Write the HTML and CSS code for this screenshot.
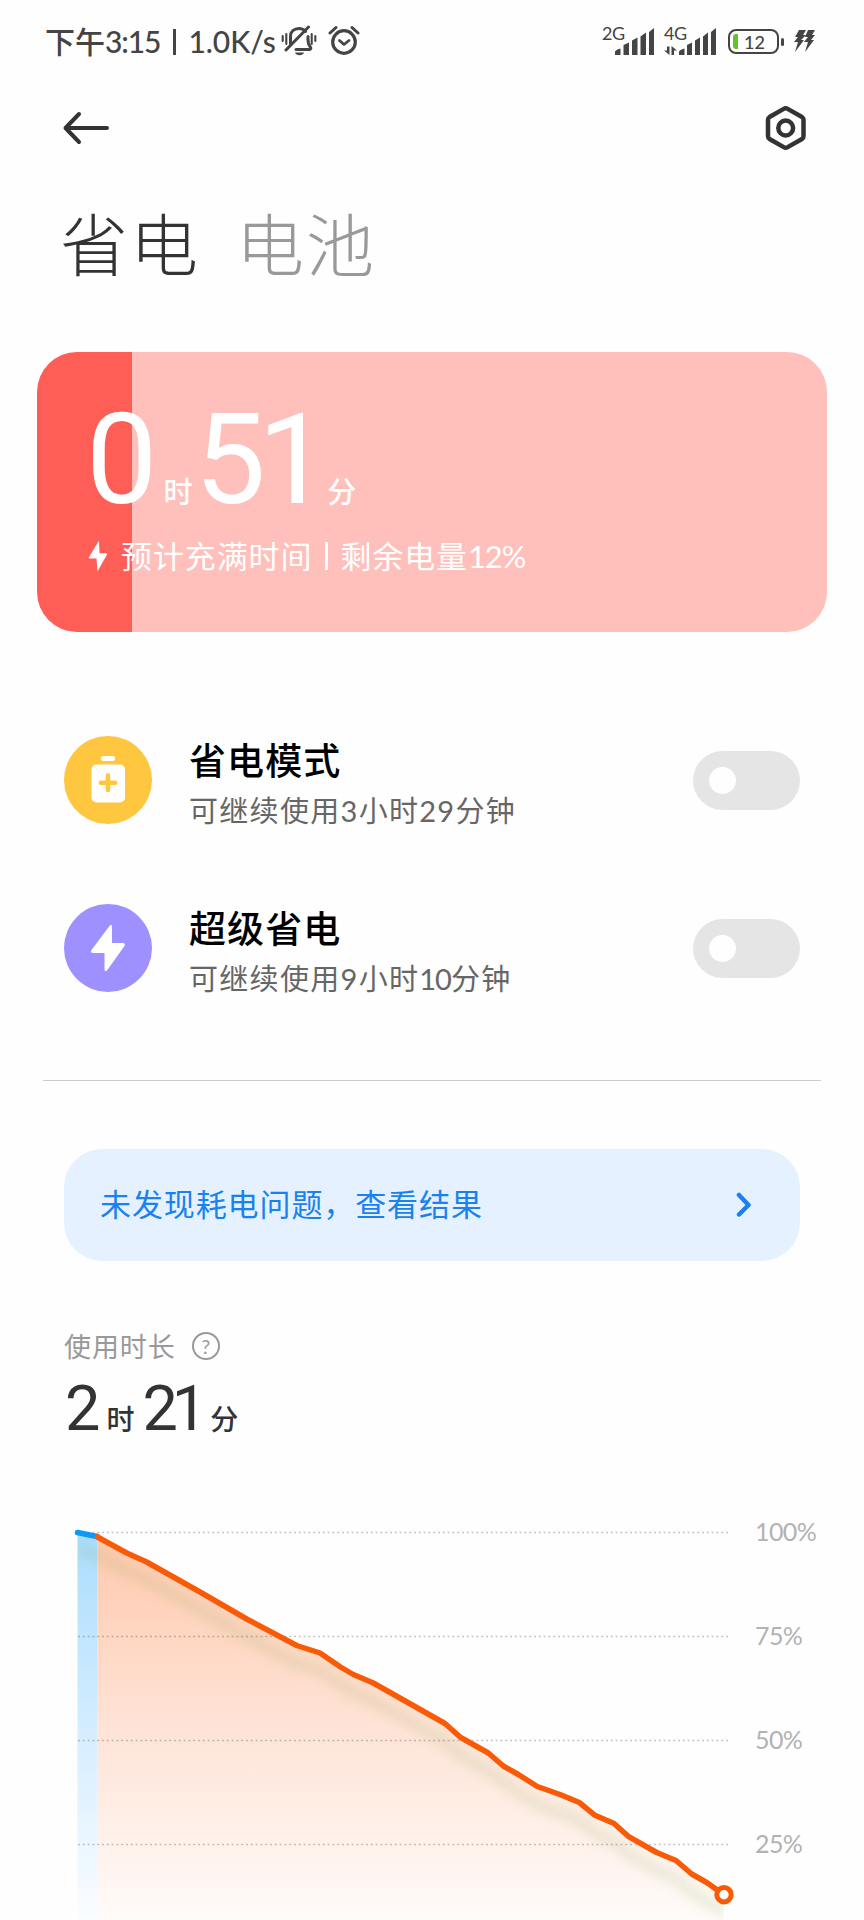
FILE: index.html
```html
<!DOCTYPE html>
<html lang="zh-CN">
<head>
  <meta charset="UTF-8" />
  <meta name="viewport" content="width=device-width, initial-scale=1.0" />
  <title>省电与电池</title>
  <link rel="stylesheet" href="styles.css">
</head>
<body>

  <div class="status-bar">
    <div class="status-left">
      <span class="clock">下午<span class="num">3:15</span></span>
      <span class="sep"></span>
      <span class="speed">1.0K/s</span>
      <svg class="icon-mute" width="36" height="32" viewBox="0 0 36 32" fill="none" stroke="#444" stroke-width="3" stroke-linecap="round">
        <path d="M1.7 11v5M5.3 9v10M30.7 9v10M34.3 11v5" stroke-width="2.1" />
        <path d="M9.5 19V11.500C9.500 6.500 13 3.500 18 3.500c3 0 5 1 6.500 3M27 11.500c0 5-.5 7 2 10 1.500 2 .5 3-1 3H15" />
        <path d="M5 25L27.500 2" />
        <path d="M14 27.500h9c-1 3.500-8 3.500-9 0z" fill="#444" stroke="none" />
      </svg>
      <svg class="icon-alarm" width="32" height="32" viewBox="0 0 32 32" fill="none" stroke="#444" stroke-linecap="round" stroke-linejoin="round">
        <circle cx="16" cy="17" r="11.300" stroke-width="3.200" />
        <path d="M11.500 15.500l4.500 4 5-4" stroke-width="2.800" />
        <path d="M2 8l6-5.500M30 8l-6-5.500" stroke-width="3" />
      </svg>
    </div>
    <div class="status-right">
      <div class="signal">
        <span class="net">2G</span>
        <svg width="52" height="32" viewBox="0 0 52 32" fill="#444">
          <path d="M13 31v-3q0-2 5.500-3.500V31zM21.500 31V21l5.500-2.500V31zM30 31V16.500l5.500-3V31zM38.500 31V12.500l5.500-4V31zM47 31V8l5-4V31z" />
        </svg>
      </div>
      <div class="signal">
        <span class="net">4G</span>
        <svg width="52" height="32" viewBox="0 0 52 32" fill="#444">
          <path d="M3 22.500h2.500V31L0 26.500h3zM7.500 31V22l5.500 4.500h-3V31z" />
          <path d="M15 31v-3q0-2 5.500-3.500V31zM23 31V21l5-2.500V31zM31 31V16.500l5-3V31zM39 31V12.500l5-4V31zM47 31V8l5-4V31z" />
        </svg>
      </div>
      <div class="battery">
        <span class="battery-level"></span>
        <span class="battery-num">12</span>
      </div>
      <svg class="icon-charge" width="24" height="24" viewBox="0 0 24 24" fill="#444">
        <path d="M6 1h7l-3 5h3L8 11h3L2 23 5 13H1l4-5H2zM15 1h7l-3 5h3l-4 5h3l-9 12 3-10h-4l4-5h-3z" />
      </svg>
    </div>
  </div>

  <header class="top-bar">
    <svg width="48" height="34" viewBox="0 0 48 34" fill="none" stroke="#333" stroke-width="4" stroke-linecap="round" stroke-linejoin="round">
      <path d="M17 3L3.500 17 17 31M3.500 17H45" />
    </svg>
    <svg width="42" height="46" viewBox="0 0 42 46" fill="none" stroke="#333" stroke-width="4.500" stroke-linejoin="round">
      <path d="M18.700 3.900q2-1.200 4 0L37 12q1.500 1 1.500 2.700v16.600Q38.500 33 37 34L22.700 42.100q-2 1.200-4 0L4.500 34Q3 33 3 31.300V14.700Q3 13 4.500 12z" />
      <circle cx="20.700" cy="23" r="7.400" />
    </svg>
  </header>

  <nav class="tabs">
    <a class="tab active">省电</a>
    <a class="tab">电池</a>
  </nav>

  <section class="charge-card">
    <div class="charge-time">
      <span class="big">0</span><span class="unit">时</span><span class="big">51</span><span class="unit">分</span>
    </div>
    <div class="charge-info">
      <svg width="20" height="32" viewBox="0 0 20 32" fill="#fff">
        <path d="M11 .5L.8 17.500q-.5 1 .5 1H8.500L9.500 31.500 19 14.500q.5-1.200-.6-1.200H11.500z" />
      </svg>
      <span class="charge-text">预计充满时间</span>
      <span class="bar"></span>
      <span class="charge-text">剩余电量<span class="num">12%</span></span>
    </div>
  </section>

  <section class="modes">
    <div class="mode">
      <svg width="88" height="88" viewBox="0 0 88 88">
        <circle cx="44" cy="44" r="44" fill="#ffc640" />
        <rect x="37" y="20" width="14" height="5" rx="2.500" fill="#fff" />
        <rect x="27.500" y="28.500" width="33.500" height="38" rx="5" fill="#fff" />
        <path d="M44 39.500v14.500M36.800 46.800h14.500" stroke="#ffc640" stroke-width="4.500" stroke-linecap="round" />
      </svg>
      <div class="mode-text">
        <h3>省电模式</h3>
        <p>可继续使用<span class="num">3</span>小时<span class="num">29</span>分钟</p>
      </div>
      <span class="switch"></span>
    </div>
    <div class="mode">
      <svg width="88" height="88" viewBox="0 0 88 88">
        <circle cx="44" cy="44" r="44" fill="#9e91ff" />
        <path d="M45.500 22L27.500 46q-1.500 3 1.500 3H40.500V65.500q.5 3 2.500 1L60.500 42q1-3-1.500-3H48V22.500q-.5-3-2.500-.5z" fill="#fff" />
      </svg>
      <div class="mode-text">
        <h3>超级省电</h3>
        <p>可继续使用<span class="num">9</span>小时<span class="num tight">10</span>分钟</p>
      </div>
      <span class="switch"></span>
    </div>
  </section>

  <a class="result">
    <span class="result-text">未发现耗电问题，查看结果</span>
    <svg width="16" height="26" viewBox="0 0 16 26" fill="none" stroke="#1a82f0" stroke-width="4.500" stroke-linecap="round" stroke-linejoin="round">
      <path d="M3 3l9.500 10L3 22.500" />
    </svg>
  </a>

  <section class="usage">
    <div class="usage-label">
      <span>使用时长</span>
      <span class="help">?</span>
    </div>
    <div class="usage-time">
      <span class="big">2</span><span class="unit">时</span><span class="big">21</span><span class="unit">分</span>
    </div>
  </section>

  <section class="chart">
    <svg width="740" height="408" viewBox="0 0 740 408" fill="none">
      <defs>
        <linearGradient id="blueFill" x1="0" y1="20" x2="0" y2="408" gradientUnits="userSpaceOnUse">
          <stop offset="0" stop-color="#a9dcfc" />
          <stop offset="0.250" stop-color="#bfe5ff" />
          <stop offset="1" stop-color="#fbfdff" />
        </linearGradient>
        <linearGradient id="orangeFill" x1="0" y1="20" x2="0" y2="408" gradientUnits="userSpaceOnUse">
          <stop offset="0" stop-color="#ffc8ac" />
          <stop offset="0.500" stop-color="#fee3d6" />
          <stop offset="1" stop-color="#fffbf9" />
        </linearGradient>
        <filter id="soft" x="-10%" y="-10%" width="120%" height="120%">
          <feGaussianBlur stdDeviation="5" />
        </filter>
        <clipPath id="plot">
          <rect x="78" y="0" width="646" height="408" />
        </clipPath>
      </defs>
      <path d="M77.500 20.500L97.500 25V408H77.500z" fill="url(#blueFill)" />
      <path fill="url(#orangeFill)" d="M97.500 25L126.700 41 146.700 50 200 80 246.700 107 296.700 133.500 320 141 340.500 155 353.300 162.500 373.300 171 445 211.500 460.700 225.500 488.300 241 503.300 254 518.300 262.500 537.300 274.500 560 282.500 579.300 290.500 595 303.300 614 311.500 628.300 324.300 656.700 340.500 676 348.500 691.700 362 706.700 370.500 723.700 382.500V408H97.500z" />
      <g clip-path="url(#plot)">
        <path filter="url(#soft)" stroke="#7aa050" stroke-opacity=".13" stroke-width="13" d="M78 38L97.500 43 126.700 59 146.700 68 200 98 246.700 125 296.700 151.500 320 159 353.300 180.500 373.300 189 445 229.500 460.700 243.500 488.300 259 518.300 280.500 537.300 292.500 579.300 308.500 595 321.300 614 329.500 628.300 342.300 656.700 358.500 676 366.500 691.700 380 723.700 400.500" />
      </g>
      <path class="grid-line" d="M78 20.500H731M78 124.500H731M78 228.500H731M78 332.500H731" />
      <path stroke="#0d98f5" stroke-width="5.500" stroke-linecap="round" d="M77.500 20.500L97 24.500" />
      <path stroke="#f95a06" stroke-width="5.500" stroke-linejoin="round" d="M95.500 23.500L97.500 25 126.700 41 146.700 50 200 80 246.700 107 296.700 133.500 320 141 340.500 155 353.300 162.500 373.300 171 445 211.500 460.700 225.500 488.300 241 503.300 254 518.300 262.500 537.300 274.500 560 282.500 579.300 290.500 595 303.300 614 311.500 628.300 324.300 656.700 340.500 676 348.500 691.700 362 706.700 370.500 723.700 382.500" />
      <circle cx="724" cy="382.700" r="7.200" fill="#fff" stroke="#f95a06" stroke-width="5" />
    </svg>
    <div class="scale">
      <span>100%</span>
      <span>75%</span>
      <span>50%</span>
      <span>25%</span>
    </div>
  </section>

</body>
</html>
```
FILE: styles.css
```css
/* Base Styles */
* {
  box-sizing: border-box;
  margin: 0;
  padding: 0;
}

body {
  width: 864px;
  height: 1920px;
  overflow: hidden;
  background: #fefefe;
  color: #333;
  font-family: Lato, 'Noto Sans CJK SC', sans-serif;
}

svg {
  display: block;
  flex-shrink: 0;
}

/* Status bar */
.status-bar {
  display: flex;
  justify-content: space-between;
  height: 84px;
  padding: 0 47px 0 45px;
  color: #444;
}

.status-left {
  display: flex;
  align-items: center;
  height: 82px;
  font-size: 30px;
  font-weight: 500;
}

.clock {
  line-height: 40px;
}

.clock .num {
  letter-spacing: -1.1px;
}

.sep {
  width: 3px;
  height: 26px;
  margin: 2px 12px 0 13px;
  background: #444;
}

.speed {
  line-height: 40px;
}

.icon-mute {
  margin-left: 5px;
}

.icon-alarm {
  margin-left: 11px;
}

.status-right {
  display: flex;
  align-items: flex-start;
  padding-top: 24px;
}

.signal {
  position: relative;
  margin-right: 10px;
}

.net {
  position: absolute;
  top: 0;
  left: 0;
  font-size: 18px;
  line-height: 18px;
  letter-spacing: -0.5px;
}

.battery {
  position: relative;
  display: flex;
  align-items: center;
  width: 51px;
  height: 25px;
  margin: 5px 0 0 2px;
  padding-left: 3px;
  border: 2.5px solid #444;
  border-radius: 8px;
}

.battery::after {
  content: "";
  position: absolute;
  right: -7px;
  width: 3px;
  height: 8px;
  border-radius: 2px;
  background: #444;
}

.battery-level {
  width: 5px;
  height: 15px;
  border-radius: 3px 0 0 3px;
  background: #66c12f;
}

.battery-num {
  margin-left: 6px;
  font-size: 18px;
  font-weight: 500;
  line-height: 20px;
}

.icon-charge {
  margin: 5px 0 0 14px;
}

/* Top bar */
.top-bar {
  display: flex;
  align-items: center;
  justify-content: space-between;
  height: 88px;
  padding: 0 57px 0 62px;
}

/* Tabs */
.tabs {
  display: flex;
  gap: 36px;
  height: 180px;
  padding: 25px 0 0 60px;
}

.tab {
  font-size: 68px;
  font-weight: 300;
  line-height: 96px;
  letter-spacing: 2px;
  color: #999;
}

.tab.active {
  color: #333;
}

/* Charging card */
.charge-card {
  width: 790px;
  height: 280px;
  margin-left: 37px;
  padding: 46px 0 0 49px;
  border-radius: 40px;
  background: linear-gradient(90deg, #ff5e57 95px, #ffbfba 95px);
  color: #fff;
}

.charge-time,
.usage-time {
  display: flex;
  align-items: baseline;
}

.charge-time {
  height: 124px;
}

.big {
  font-family: Roboto, sans-serif;
}

.charge-time .big {
  font-size: 127px;
  line-height: 124px;
  letter-spacing: -8px;
}

.charge-time .big:first-child {
  letter-spacing: 0;
}

.charge-time .unit {
  margin: 0 2px 0 6px;
  font-size: 29px;
  font-weight: 500;
}

.charge-info {
  display: flex;
  align-items: center;
  height: 40px;
  margin-top: 14px;
}

.charge-text {
  font-size: 31px;
  line-height: 40px;
  letter-spacing: 0.9px;
}

.charge-info svg {
  margin: 0 13px 0 2px;
}

.bar {
  width: 3px;
  height: 28px;
  margin: 0 12px 0 13px;
  background: #fff;
}

.charge-text .num {
  letter-spacing: -1.3px;
}

/* Power modes */
.modes {
  display: flex;
  flex-direction: column;
  gap: 80px;
  width: 778px;
  height: 449px;
  margin-left: 43px;
  padding: 104px 21px 0;
  border-bottom: 1px solid #ccc;
}

.mode {
  display: flex;
  align-items: center;
  height: 88px;
}

.mode-text {
  flex: 1;
  margin-left: 37px;
  padding-top: 9px;
}

.mode-text h3 {
  font-size: 37px;
  font-weight: 500;
  line-height: 52px;
  letter-spacing: 1.1px;
  color: #000;
}

.mode-text p {
  font-size: 29px;
  font-weight: 400;
  line-height: 48px;
  letter-spacing: 1.3px;
  color: #666;
}

.mode-text .tight {
  letter-spacing: -1px;
}

.switch {
  width: 107px;
  height: 59px;
  padding: 16px;
  border-radius: 30px;
  background: #e5e5e5;
}

.switch::before {
  content: "";
  display: block;
  width: 27px;
  height: 27px;
  border-radius: 50%;
  background: #fefefe;
}

/* Check result */
.result {
  display: flex;
  align-items: center;
  justify-content: space-between;
  width: 736px;
  height: 112px;
  margin: 68px 0 0 64px;
  padding: 0 48px 0 36px;
  border-radius: 38px;
  background: #e5f1ff;
  color: #1a82f0;
  font-size: 31px;
  letter-spacing: 0.9px;
}

.result-text {
  padding-bottom: 5px;
}

/* Usage time */
.usage {
  height: 251px;
  padding: 63px 0 0 64px;
}

.usage-label {
  display: flex;
  align-items: center;
  height: 42px;
  color: #999;
  font-size: 27px;
  letter-spacing: 0.9px;
}

.help {
  width: 28px;
  height: 28px;
  margin: 2px 0 0 16px;
  border: 2px solid #999;
  border-radius: 50%;
  font-size: 20px;
  line-height: 24px;
  text-align: center;
  letter-spacing: 0;
}

.usage-time {
  padding: 3px 0 0 1px;
}

.usage-time .big {
  font-size: 63px;
  line-height: 80px;
}

.usage-time .unit {
  margin: 0 8px 0 6px;
  font-size: 28px;
  font-weight: 500;
}

.usage-time .unit + .big {
  letter-spacing: -6px;
}

.usage-time .unit:last-child {
  margin-left: 9px;
}

/* Chart */
.chart {
  display: flex;
  height: 408px;
}

.grid-line {
  stroke: #000;
  stroke-opacity: 0.22;
  stroke-width: 1.3;
  stroke-dasharray: 2 2.8;
}

.scale {
  display: flex;
  flex-direction: column;
  gap: 74px;
  padding: 4px 0 0 15px;
  color: #b2b2b2;
  font-size: 25px;
  letter-spacing: -0.6px;
  line-height: 30px;
}
```
